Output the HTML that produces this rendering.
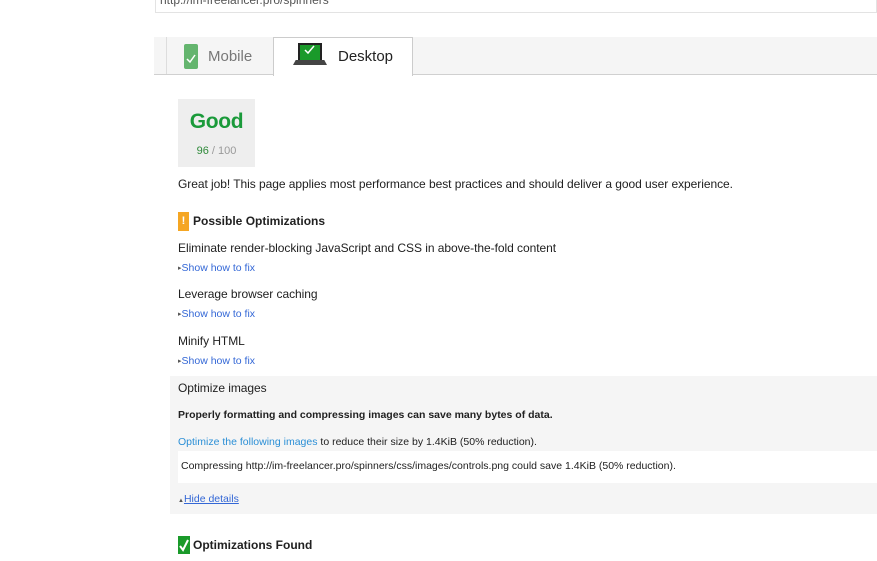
<!DOCTYPE html>
<html><head><style>
*{margin:0;padding:0;box-sizing:border-box}
body{width:877px;height:561px;background:#fff;font-family:"Liberation Sans",Arial,sans-serif;position:relative;overflow:hidden;color:#212121}
.a{position:absolute}
.t{font-size:12px;color:#212121;letter-spacing:-0.05px}
.s{font-size:10.5px;color:#3367d6}
.s i{font-style:normal;font-size:7px;color:#555;vertical-align:1px}
</style></head><body>
<div class="a" style="left:155px;top:-10px;width:722px;height:23px;border:1px solid #e3e3e3;border-top:none"></div>
<div class="a" style="left:160px;top:-7px;font-size:12px;color:#555">http://im-freelancer.pro/spinners</div>
<div class="a" style="left:154px;top:37px;width:723px;height:38px;background:#f5f5f5;border-bottom:1px solid #d0d0d0"></div>
<div class="a" style="left:166px;top:37px;width:1px;height:37px;background:#ddd"></div>
<div class="a" style="left:184px;top:44px;width:14px;height:25px;border-radius:2px;background:#64b56e"></div>
<svg class="a" style="left:186px;top:54px" width="10" height="10"><path d="M1 5 L4 8 L9 1" stroke="#fff" stroke-width="1.5" fill="none"/></svg>
<div class="a" style="left:208px;top:48px;font-size:15px;color:#777">Mobile</div>
<div class="a" style="left:273px;top:37px;width:140px;height:39px;background:#fff;border:1px solid #ccc;border-bottom:none"></div>
<div class="a" style="left:298px;top:43px;width:24px;height:17px;background:#1a9a2a;border:2px solid #222;border-bottom:none"></div>
<svg class="a" style="left:304px;top:45px" width="12" height="10"><path d="M1 5 L4 8 L10 1" stroke="#fff" stroke-width="1.5" fill="none"/></svg>
<div class="a" style="left:293px;top:60px;width:34px;height:5px;background:#444;clip-path:polygon(8% 0,92% 0,100% 100%,0 100%)"></div>
<div class="a" style="left:338px;top:48px;font-size:15px;color:#222">Desktop</div>
<div class="a" style="left:178px;top:99px;width:77px;height:68px;background:#eee"></div>
<div class="a" style="left:178px;top:110px;width:77px;text-align:center;font-size:21px;font-weight:bold;color:#1a9a3a;letter-spacing:-0.3px">Good</div>
<div class="a" style="left:178px;top:145px;width:77px;text-align:center;font-size:11px;color:#999"><span style="color:#2f8a3a">96</span> / 100</div>
<div class="a t" style="left:178px;top:177px">Great job! This page applies most performance best practices and should deliver a good user experience.</div>
<div class="a" style="left:178px;top:212px;width:11px;height:19px;background:#f5a623;color:#fff;font-size:11px;font-weight:bold;text-align:center;line-height:19px">!</div>
<div class="a" style="left:193px;top:214px;font-size:12px;font-weight:bold;color:#212121">Possible Optimizations</div>
<div class="a t" style="left:178px;top:241px">Eliminate render-blocking JavaScript and CSS in above-the-fold content</div>
<div class="a s" style="left:178px;top:262px"><i>▸</i>Show how to fix</div>
<div class="a t" style="left:178px;top:287px">Leverage browser caching</div>
<div class="a s" style="left:178px;top:308px"><i>▸</i>Show how to fix</div>
<div class="a t" style="left:178px;top:334px">Minify HTML</div>
<div class="a s" style="left:178px;top:355px"><i>▸</i>Show how to fix</div>
<div class="a" style="left:170px;top:376px;width:707px;height:138px;background:#f5f5f5"></div>
<div class="a t" style="left:178px;top:381px">Optimize images</div>
<div class="a" style="left:178px;top:409px;font-size:10.5px;font-weight:bold;color:#212121">Properly formatting and compressing images can save many bytes of data.</div>
<div class="a" style="left:178px;top:436px;font-size:10.5px;color:#212121"><span style="color:#2b8fd6">Optimize the following images</span> to reduce their size by 1.4KiB (50% reduction).</div>
<div class="a" style="left:178px;top:451px;width:699px;height:32px;background:#fff"></div>
<div class="a" style="left:181px;top:460px;font-size:10.5px;color:#212121">Compressing http://im-freelancer.pro/spinners/css/images/controls.png could save 1.4KiB (50% reduction).</div>
<div class="a s" style="left:178px;top:493px"><span style="font-size:6px;color:#555">▲</span><u>Hide details</u></div>
<div class="a" style="left:178px;top:536px;width:12px;height:18px;background:#1a9a2a"></div>
<svg class="a" style="left:179px;top:539px" width="10" height="13"><path d="M1 7 L4 11 L9 1" stroke="#fff" stroke-width="2" fill="none"/></svg>
<div class="a" style="left:193px;top:538px;font-size:12px;font-weight:bold;color:#212121">Optimizations Found</div>
</body></html>
